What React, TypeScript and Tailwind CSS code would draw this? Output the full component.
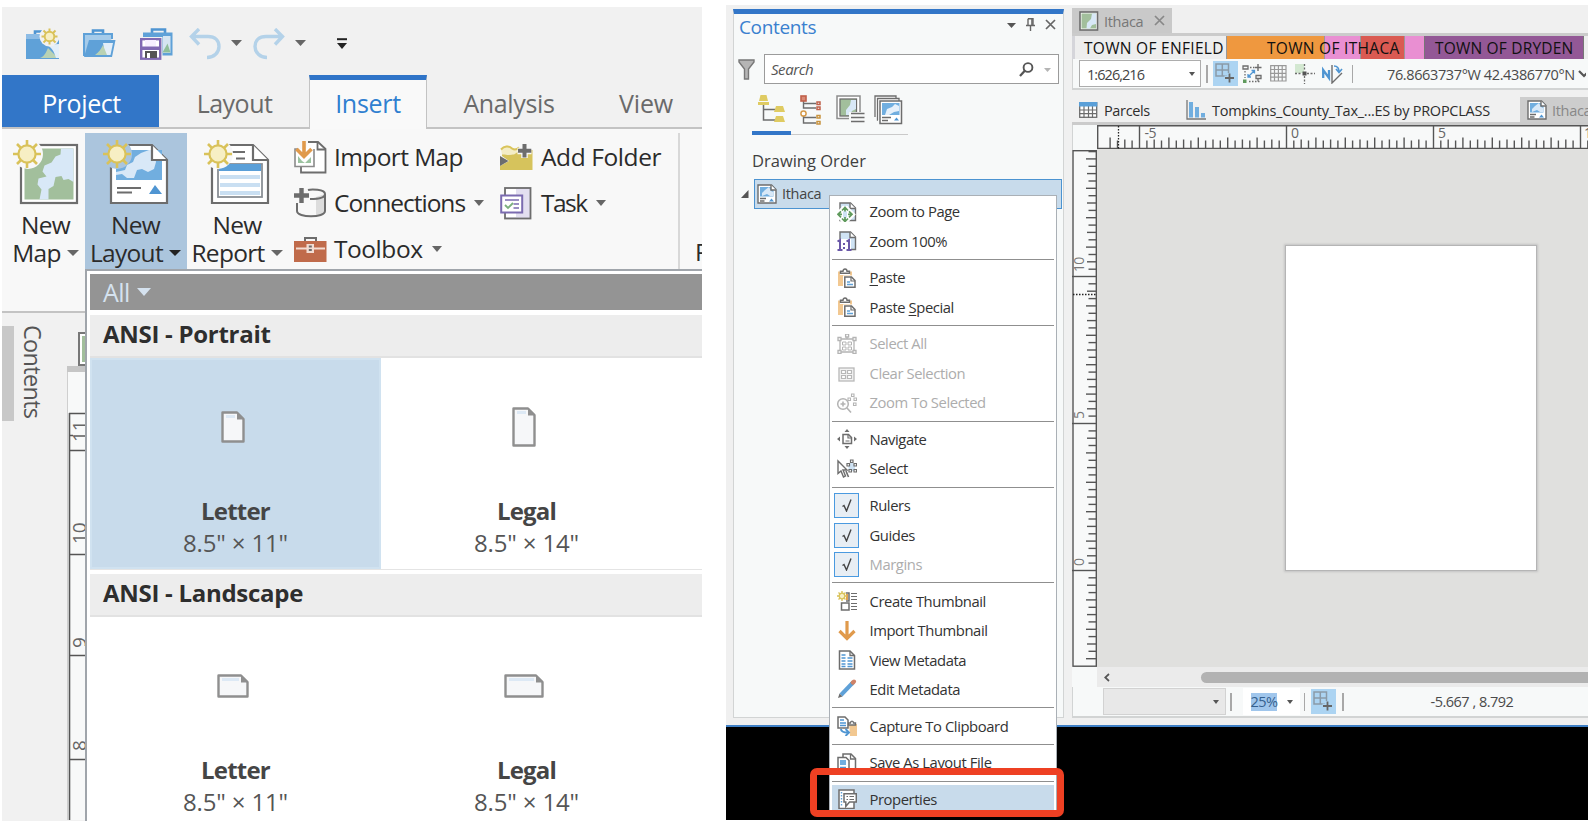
import React from "react";

type P = { children?: React.ReactNode; className?: string };

const Svg = ({ w, h, children, className = "" }: P & { w: number; h: number }) => (
  <svg width={w} height={h} viewBox={`0 0 ${w} ${h}`} fill="none" className={`block shrink-0 ${className}`}>
    {children}
  </svg>
);

const Caret = ({ w = 10, h = 6, color = "#555", className = "" }: { w?: number; h?: number; color?: string; className?: string }) => (
  <Svg w={w} h={h} className={className}>
    <path d={`M0 0H${w}L${w / 2} ${h}Z`} fill={color} />
  </Svg>
);

const Sun = () => (
  <g>
    <path
      d="M14 0V28M0 14H28M4 4L24 24M24 4L4 24"
      stroke="#d9c25a"
      strokeWidth="2.6"
    />
    <circle cx="14" cy="14" r="8.6" fill="#f7efc4" stroke="#d9c25a" strokeWidth="2.2" />
  </g>
);

/* ---------- ribbon icons ---------- */

const NewMapIcon = () => (
  <Svg w={66} h={65}>
    <rect x="8" y="5" width="56" height="58" fill="#fff" stroke="#6d6d6d" strokeWidth="2.2" />
    <rect x="11.500" y="8.500" width="49" height="51" fill="#a2bf9c" />
    <path d="M48 8.500h12.500V42l-5-3-5 1-2-4-6 1-2 9-5 3 0 10.500h-9l2-10-4-5 1-6 8-2-4-5 2-6 7-3 4-6 5-2z" fill="#d8e8f7" />
    <circle cx="15" cy="14" r="15" fill="#f8f8f8" />
    <Sun />
  </Svg>
);
const NewLayoutIcon = () => (
  <Svg w={66} h={65}>
    <path d="M8 5H49L64 20V63H8Z" fill="#fff" stroke="#6d6d6d" strokeWidth="2.2" />
    <rect x="13" y="10" width="46" height="30" fill="#71aedf" />
    <path d="M38 13l8-3h5l2 12-2 7-6 3-6-3-5 1-3 8h-7l-5-4-6 1v-3l9-2 2-5 6-3 2-5z" fill="#d8e8f7" />
    <path d="M49 5V20H64" fill="#fff" stroke="#6d6d6d" strokeWidth="2.2" />
    <path d="M14 48H38M14 52.500H29" stroke="#6d6d6d" strokeWidth="2.200" />
    <path d="M46 54L52 45L59 54Z" fill="#4f95d2" />
    <circle cx="14" cy="14" r="15" fill="#abc5dd" />
    <Sun />
  </Svg>
);
const NewReportIcon = () => (
  <Svg w={66} h={65}>
    <path d="M8 5H49L64 20V63H8Z" fill="#fff" stroke="#6d6d6d" strokeWidth="2.2" />
    <path d="M27 12H41M32 18.500H41" stroke="#6d6d6d" strokeWidth="2" />
    <rect x="14" y="24" width="44" height="33" fill="#fff" stroke="#8a8f95" strokeWidth="1.800" />
    <rect x="15" y="24" width="42" height="7" fill="#5a9fd8" />
    <path d="M16 37H56M16 45H56M16 53H56" stroke="#c9dff2" strokeWidth="4" />
    <path d="M49 5V20H64" fill="#fff" stroke="#6d6d6d" strokeWidth="2.2" />
    <circle cx="14" cy="14" r="15" fill="#f8f8f8" />
    <Sun />
  </Svg>
);
const ImportMapIcon = () => (
  <Svg w={33} h={33}>
    <path d="M14 1H24L31.500 8V31.500H7V26" fill="#fff" stroke="#6d6d6d" strokeWidth="1.800" />
    <path d="M23.500 1V8.500H31.500" stroke="#6d6d6d" strokeWidth="1.800" />
    <path d="M4 8H1V25.500H20V8" fill="#fff" stroke="#8a8a8a" strokeWidth="1.600" />
    <path d="M4 22V15l4 5 3 2zM11 22l6-6v6z" fill="#9cc3a0" />
    <path d="M10 0V15M2.500 8L10 15.500L17.500 8" stroke="#e09a4c" strokeWidth="3.600" />
  </Svg>
);
const ConnectionsIcon = () => (
  <Svg w={33} h={30}>
    <path d="M22 9v18c6-1 9-2 9-4V6z" fill="#dcdcdc" />
    <path d="M3 15V23c0 7 28 7 28 0V6c0-5-14-5-17-4M31 6c0 4-8 5-15 5" stroke="#6d6d6d" strokeWidth="2" />
    <path d="M7.500 0V15M0 7.500H15" stroke="#6d6d6d" strokeWidth="4.400" />
  </Svg>
);
const ToolboxIcon = () => (
  <Svg w={33} h={25}>
    <path d="M11 5V1H22V5" stroke="#6d6d6d" strokeWidth="2" />
    <rect x="0" y="4" width="32.500" height="21" fill="#c06b4b" />
    <path d="M2 11.500H31" stroke="#f3ddd3" strokeWidth="2" />
    <rect x="12.500" y="7" width="7.500" height="9" fill="#f3ddd3" />
    <path d="M16.300 8.500v6" stroke="#6d6d6d" strokeWidth="3" strokeDasharray="2 1.500" />
  </Svg>
);
const AddFolderIcon = () => (
  <Svg w={33} h={27}>
    <path d="M0 26V22L9 17L2 12V9c6 3 11 2 14-1l3-2h13.500V26Z" fill="#d6c35c" />
    <path d="M1 5c3-4 8-4.500 11-1.500 3 2 5 1 7-1l1 4-6 4H2z" fill="#f4edc6" />
    <path d="M1 5.500c3-3.500 8-4 11-1 3 2 5 1 7-1" stroke="#d9c45c" strokeWidth="2" />
    <path d="M0 12L8.500 17L0 22Z" fill="#6d6d6d" />
    <path d="M24.500 0V14M17.500 7H31.500" stroke="#f8f8f8" strokeWidth="6.500" />
    <path d="M24.500 0V13.500M18 6.800H31.300" stroke="#6d6d6d" strokeWidth="4" />
  </Svg>
);
const TaskIcon = () => (
  <Svg w={32} h={34}>
    <rect x="5" y="2" width="25.500" height="30.500" fill="#e3dff0" stroke="#6d6d6d" strokeWidth="1.800" />
    <rect x="6" y="3" width="10" height="28" fill="#fff" />
    <rect x="1.200" y="9.500" width="21" height="17" fill="#fff" stroke="#7b6bb0" strokeWidth="2" />
    <path d="M5 14H19M13.500 18H19M13.500 22H19" stroke="#7b6bb0" strokeWidth="1.700" />
    <path d="M5 19l3 3 5-5" stroke="#7bb07e" strokeWidth="1.900" />
  </Svg>
);

/* ---------- quick access icons ---------- */

const NewProjectIcon = () => (
  <Svg w={34} h={32}>
    <path d="M9 8V3.500H18" stroke="#4f95d2" strokeWidth="2.600" />
    <rect x="0" y="6" width="33" height="25" fill="#5fa1d8" />
    <path d="M14 30c5-2 6-6 8-10l10 10z" fill="#b9d2b4" />
    <path d="M19 17c7 1 9 7 11 13h3V16z" fill="#e3eef8" />
    <path d="M0 6h15v5H0z" fill="#8dbce5" />
    <circle cx="23.500" cy="8.500" r="10" fill="#f1f1f1" />
    <path d="M23.500 0.500V16.500M15.500 8.500H31.500M17.500 2.500L29.500 14.500M29.500 2.500L17.500 14.500" stroke="#d9c25a" strokeWidth="2" />
    <circle cx="23.500" cy="8.500" r="4.800" fill="#f7efc4" stroke="#d9c25a" strokeWidth="1.900" />
  </Svg>
);
const OpenProjectIcon = () => (
  <Svg w={34} h={30}>
    <path d="M10 5V1.500H20V5" stroke="#4f95d2" strokeWidth="2.600" />
    <path d="M1 27V5H29V10" fill="#a5cbea" stroke="#5fa1d8" strokeWidth="2" />
    <path d="M6 11H32.500L29 28H1Z" fill="#5fa1d8" />
    <path d="M20 14l10 0L27.500 26H22z" fill="#e3eef8" />
    <path d="M12 26c4-3 6-6 8-10l4 10z" fill="#b9d2b4" />
  </Svg>
);
const SaveProjectIcon = () => (
  <Svg w={34} h={32}>
    <path d="M12 5V1.500H25V5" stroke="#4f95d2" strokeWidth="2.600" />
    <rect x="3" y="4.500" width="29.500" height="23" fill="#5fa1d8" />
    <rect x="0" y="9" width="22.500" height="23" fill="#f1f1f1" />
    <rect x="23" y="8" width="7.500" height="17" fill="#d5e5f2" />
    <path d="M22.500 24.500l5-9 3 9z" fill="#8fbf9a" />
    <rect x="1.200" y="11.200" width="19" height="19.500" fill="#fff" stroke="#8069b3" strokeWidth="2.400" />
    <rect x="5" y="12" width="11" height="6.500" fill="#f6efff" />
    <rect x="1" y="18.500" width="19" height="3.500" fill="#8069b3" />
    <rect x="5" y="23" width="12" height="7" fill="#555" />
    <rect x="7" y="25" width="3" height="5" fill="#fff" />
  </Svg>
);
const Undo = ({ className = "" }: P) => (
  <Svg w={33} h={32} className={className}>
    <path d="M10 1L2.500 8.500L10 16.500M3 8.500H19c7 0 11 4 11 10s-5 11-12 11" stroke="#b4d2e9" strokeWidth="3.400" />
  </Svg>
);

/* ---------- small 20px icons ---------- */

const g = "#6d6d6d";
const LayoutIcon = () => (
  <Svg w={20} h={20}>
    <path d="M1 1H14.500L19 5.500V19H1Z" fill="#fff" stroke={g} strokeWidth="1.400" />
    <rect x="3" y="3" width="13.500" height="9.500" fill="#71aedf" />
    <path d="M8 6l4-3 2 4 2.500 1v4H13l-3-2-5 2V9z" fill="#d8e8f7" />
    <path d="M14 1V6H19" fill="#fff" stroke={g} strokeWidth="1.400" />
    <path d="M3 14.500H9M3 17H7.500" stroke={g} strokeWidth="1.300" />
    <path d="M12 17.500l2.500-3 2.500 3z" fill="#4f95d2" />
  </Svg>
);
const MapTabIcon = () => (
  <Svg w={20} h={20}>
    <rect x="1" y="1" width="17.500" height="18" fill="#fff" stroke={g} strokeWidth="1.600" />
    <rect x="2.500" y="2.500" width="14.500" height="15" fill="#a2bf9c" />
    <path d="M13 2.500h4V13l-4 1-2 3.500H7.500L8 12l4-4z" fill="#d8e8f7" />
  </Svg>
);
const AddGridIcon = () => (
  <Svg w={25} h={25}>
    <path d="M3 3H15.500V15H3ZM9.300 3V15M3 9H15.500" stroke="#8a9aa8" strokeWidth="1.500" />
    <path d="M16.500 12V22M11.500 17H21.500" stroke="#acd4f2" strokeWidth="5" />
    <path d="M16.500 12.500V21.500M12 17H21" stroke="#666" strokeWidth="1.800" />
  </Svg>
);

const PageFold = ({ fill = "#fff" }: { fill?: string }) => (
  <>
    <path d="M3 1H13.500L18.500 6V18.500H3Z" fill={fill} stroke={g} strokeWidth="1.400" />
    <path d="M13 1V6.500H18.500" fill="#fff" stroke={g} strokeWidth="1.400" />
  </>
);
const Clip = () => (
  <>
    <path d="M1 3.500H15V18H1Z" fill="#f2c891" />
    <path d="M3 3H13V7H3Z" fill="#fff" />
    <path d="M3.500 5.200V3.300H6c0-3 4-3 4 0h2.500v1.900z" fill="#fff" stroke={g} strokeWidth="1.400" />
    <path d="M6 7.500H16V20H6Z" fill="#fff" />
    <path d="M7.800 9H14.500L18 12.500V19.300H7.800Z" fill="#fff" stroke={g} strokeWidth="1.500" />
    <path d="M14 9v4h4" stroke={g} strokeWidth="1.200" />
    <path d="M10 14h3M10 16.500h6" stroke="#5fa1d8" strokeWidth="1.400" />
  </>
);
const icons: Record<string, React.ReactNode> = {
  zoomPage: (
    <>
      <PageFold fill="#cfe3f4" />
      <path d="M8 5L12 9M8 5L4 9M8 20L4 16M8 20L12 16M0 12.500L4 8.500V16.500ZM16 12.500L12 8.500V16.500Z" stroke="#fff" strokeWidth="4" />
      <path d="M8 5.500v4M8 19v-4M1 12.300h4M15 12.300h-4M5 8.500L8 5.500l3 3M5 16.500l3 3 3-3M4 9.300L1 12.300l3 3M12 9.300l3 3-3 3" stroke="#5f9a5c" strokeWidth="1.700" />
    </>
  ),
  zoom100: (
    <>
      <PageFold fill="#cfe3f4" />
      <rect x="0" y="8" width="14" height="12" fill="#fff" />
      <path d="M0.500 10.500L3 9V19.500M9.500 10.500L12 9V19.500M0.500 19h5M9.500 19h5" stroke="#6a58a8" strokeWidth="2" />
      <path d="M7 12v2M7 16v2" stroke="#6a58a8" strokeWidth="2" />
    </>
  ),
  paste: <Clip />,
  selectAll: (
    <g stroke="#b4b4b4" strokeWidth="1.300">
      <path d="M3 5H17V18H3ZM10 5V2" />
      <path d="M5.500 8h3.500v3H5.500zM11 8h3.500v3H11zM5.500 13h3.500v3H5.500zM11 13h3.500v3H11z" strokeWidth="1" />
      <path d="M1 3.500h3v3H1zM16 3.500h3v3h-3zM1 16.500h3v3H1zM16 16.500h3v3h-3zM8.600 0h3v3h-3z" fill="#fff" />
    </g>
  ),
  clear: (
    <g stroke="#b8b8b8" strokeWidth="1.300">
      <rect x="2" y="5" width="15" height="13" fill="#f3f3f3" />
      <path d="M4.500 7.500H8.500v3H4.500zM10.500 7.500h4v3h-4zM4.500 12.500H8.500v3H4.500zM10.500 12.500h4v3h-4z" fill="#fff" strokeWidth="1.200" />
    </g>
  ),
  zoomSel: (
    <g stroke="#b4b4b4" strokeWidth="1.500">
      <circle cx="6" cy="11" r="5.300" fill="#fff" />
      <path d="M3.500 11h5M6 8.500v5M10 15l4 4.500" strokeWidth="1.600" />
      <path d="M11 5h2.500v2.500H11zM14.500 1h2.500v2.500h-2.500zM17 5h2.500v2.500H17zM16.500 10h2.500v2.500h-2.500z" strokeWidth="1.100" />
    </g>
  ),
  navigate: (
    <>
      <path d="M10 0l2.500 3h-5zM10 20l2.500-3h-5zM0 10l3-2.500v5zM20 10l-3-2.500v5z" fill={g} />
      <path d="M6 5.500h5.500L14.500 8.500v6H6z" fill="#fff" stroke={g} strokeWidth="1.500" />
      <path d="M11 5.500V9h3.500M8.500 12h4" stroke={g} strokeWidth="1.200" />
    </>
  ),
  select: (
    <>
      <path d="M1 2V14.500L4 12l2.500 6 2-1L6 11h4z" fill="#fff" stroke={g} strokeWidth="1.400" />
      <path d="M9 12l2.500 6" stroke={g} strokeWidth="1.600" />
      <path d="M11 6l4-3 3 4v5h-6z" fill="#cfe3f4" />
      <path d="M10 4.500h2.500V7H10zM13.500 1H16v2.500h-2.500zM17 4.500h2.500V7H17zM17 10.500h2.500V13H17zM12 10.500h2.500V13H12z" fill="#fff" stroke={g} strokeWidth="1.200" />
    </>
  ),
  create: (
    <>
      <path d="M9 2h3v8h-3" stroke={g} strokeWidth="1.500" />
      <path d="M10 3v6" stroke="#e0a050" strokeWidth="2" />
      <path d="M5 0v10M0 5h10M1.500 1.500l7 7M8.500 1.500l-7 7" stroke="#d9c25a" strokeWidth="1.400" />
      <circle cx="5" cy="5" r="2.800" fill="#f7efc4" stroke="#d9c25a" strokeWidth="1.300" />
      <rect x="4.500" y="12" width="7.500" height="7" fill="#fff" stroke={g} strokeWidth="1.500" />
      <path d="M14 2.500h6M14 5.500h6M14 8.500h6M14 12.500h6M14 15.500h6M14 18.500h6" stroke={g} strokeWidth="1.200" />
    </>
  ),
  importT: <path d="M10 0V17M2.500 10L10 17.500L17.500 10" stroke="#e09a4c" strokeWidth="3.200" />,
  view: (
    <>
      <path d="M2.500 1H13L17.500 5.500V19H2.500Z" fill="#fff" stroke={g} strokeWidth="1.500" />
      <path d="M13 1V5.500H17.500" stroke={g} strokeWidth="1.300" />
      <path d="M4.500 5h4M4.500 8h4M4.500 11h4M4.500 14h4M4.500 16.500h4M10.500 8h5M10.500 11h5M10.500 14h5M10.500 16.500h5" stroke="#4f95d2" strokeWidth="1.400" />
    </>
  ),
  edit: (
    <>
      <path d="M4 16L15 4.500" stroke="#5fa1d8" strokeWidth="4" />
      <path d="M14.500 5L16.500 3" stroke="#8a8a8a" strokeWidth="4" />
      <path d="M16 3.500L17 2.500" stroke="#cf8268" strokeWidth="4" strokeLinecap="round" />
      <path d="M1 19l1.500-4.500 3 3z" fill={g} />
    </>
  ),
  capture: (
    <>
      <path d="M1 1h7l3 3v8H1z" fill="#fff" stroke={g} strokeWidth="1.500" />
      <path d="M3 4h4M3 7h6M3 9.500h6" stroke="#4f95d2" strokeWidth="1.400" />
      <path d="M12 8H20V20H13z" fill="#f2c891" />
      <path d="M11.500 9V7h2c0-2.500 3-2.500 3 0h2v2z" fill="#fff" stroke={g} strokeWidth="1.400" />
      <path d="M4 13.500c1 3 4 3 8 3" stroke="#fff" strokeWidth="4" />
      <path d="M4 13c0 3 3 3.500 7 3.500M8.500 13l3.500 3.500L8.500 20" stroke="#4f95d2" strokeWidth="1.900" />
    </>
  ),
  saveAs: (
    <>
      <path d="M6 4V1H14l4.500 4.500V18H13" fill="#fff" stroke={g} strokeWidth="1.500" />
      <path d="M13.500 1v5h5" stroke={g} strokeWidth="1.300" />
      <path d="M1 4.500h8l3 3V19H1z" fill="#fff" stroke={g} strokeWidth="1.500" />
      <rect x="3" y="7" width="6" height="5" fill="#71aedf" />
      <path d="M3 14.500h6M3 17h4" stroke="#4f95d2" strokeWidth="1.300" />
    </>
  ),
  props: (
    <>
      <rect x="2" y="1" width="15" height="18.500" fill="#fff" stroke={g} strokeWidth="1.500" />
      <path d="M4.500 3v15" stroke="#5fa1d8" strokeWidth="1.400" strokeDasharray="1.500 1.500" />
      <path d="M7 4.800H19.300V13H12.500L8.800 17.500V13H7z" fill="#fff" stroke={g} strokeWidth="1.500" />
      <path d="M9.500 7.500h1.500M9.500 10.500h1.500M12.500 7.500h4.500M12.500 10.500h4.500" stroke={g} strokeWidth="1.200" />
    </>
  ),
};

/* ---------- left window ---------- */

const BigButton = ({ icon, a, b, active, className = "" }: { icon: React.ReactNode; a: string; b: string; active?: boolean; className?: string }) => (
  <div
    className={`flex h-[138px] shrink-0 flex-col items-center pt-[6.500px] text-[24.5px] leading-[28px] text-[#2b2b2b] ${active ? "bg-[#abc5dd]" : ""} ${className}`}
  >
    {icon}
    <div className="mt-[6.500px] tracking-[-0.7px]">{a}</div>
    <div className="flex items-center gap-[6px] tracking-[-0.7px]">
      <span>{b}</span>
      <Caret w={12} h={6} color={active ? "#222" : "#666"} />
    </div>
  </div>
);

const SmallButton = ({ icon, label, caret, className = "" }: { icon: React.ReactNode; label: string; caret?: boolean; className?: string }) => (
  <div className="flex h-[46px] items-center text-[24.5px] leading-[46px] text-[#2b2b2b]">
    <div className="w-[40px] shrink-0">{icon}</div>
    <span className={`whitespace-nowrap ${className}`}>{label}</span>
    {caret && <Caret className="ml-[9px]" color="#666" />}
  </div>
);

const PageGlyph = ({ w, h }: { w: number; h: number }) => (
  <Svg w={w} h={h}>
    <path d={`M1.500 1.500H${w - 8}L${w - 1.5} 8V${h - 1.5}H1.500Z`} fill="#f6f7f9" stroke="#8f8f8f" strokeWidth="2.400" strokeLinejoin="round" />
    <path d={`M${w - 8} 1V8.500H${w - 1}Z`} fill="#8f8f8f" />
    <path d={`M5 5.500H${w - 10}`} stroke="#dde9f5" strokeWidth="3" />
  </Svg>
);

const Tile = ({ name, size, w, h, active }: { name: string; size: string; w: number; h: number; active?: boolean }) => (
  <div
    className={`flex h-[211px] w-[291px] shrink-0 flex-col items-center ${active ? "border-2 border-[#d0e2f0] bg-[#c8dbeb]" : "border-2 border-white"}`}
  >
    <div className="mt-[44px] flex h-[46px] items-center pr-[5px]">
      <PageGlyph w={w} h={h} />
    </div>
    <div className="mt-[43.500px] text-[24px] font-bold leading-[33px] tracking-[-0.8px] text-[#454545]">{name}</div>
    <div className="text-[24px] leading-[32.500px] tracking-[-0.15px] text-[#555]">{size}</div>
  </div>
);

const GalleryHeader = ({ children }: P) => (
  <div className="h-[43px] shrink-0 border-b-2 border-[#e2e2e2] bg-[#ededed] pl-[13px] text-[24px] font-bold leading-[38px] tracking-[-0.28px] text-[#2e2e2e]">
    {children}
  </div>
);

const LeftRuler = () => (
  <Svg w={19} h={454}>
    <rect x="0" y="0" width="19" height="6" fill="#c6c6c6" />
    <rect x="1" y="6" width="18" height="448" fill="#f8f9f9" />
    <path d="M0.500 6V454" stroke="#cfcfcf" />
    <path d="M2.500 47V454M2 47.500H19M2 84.500H19M2 188.500H19M2 289.500H19M2 393.500H19" stroke="#555" strokeWidth="1.600" />
    <path d="M3 69.500H6" stroke="#555" strokeWidth="1.500" />
    <g fontSize="19" fill="#666">
      <text transform="translate(19 76) rotate(-90)">11</text>
      <text transform="translate(19 178) rotate(-90)">10</text>
      <text transform="translate(19 282) rotate(-90)">9</text>
      <text transform="translate(19 385) rotate(-90)">8</text>
    </g>
  </Svg>
);

const LeftWindow = () => (
  <div className="relative ml-[2px] mt-[7px] flex h-[813.500px] w-[700px] shrink-0 flex-col overflow-hidden bg-[#f1f1f1]">
    <div className="flex h-[68px] shrink-0 items-start pl-[24px] pt-[21px]">
      <NewProjectIcon />
      <div className="ml-[23px] mt-[1px]"><OpenProjectIcon /></div>
      <div className="ml-[23px]"><SaveProjectIcon /></div>
      <Undo className="ml-[15px]" />
      <Caret w={11} h={6} className="ml-[9px] mt-[12px]" color="#666" />
      <Undo className="ml-[10px] -scale-x-100" />
      <Caret w={11} h={6} className="ml-[10px] mt-[12px]" color="#666" />
      <Svg w={10} h={12} className="ml-[31px] mt-[10px]">
        <path d="M0 1.200H10" stroke="#222" strokeWidth="2" />
        <path d="M0 5H10L5 11Z" fill="#222" />
      </Svg>
    </div>
    <div className="flex h-[54px] shrink-0 border-b-2 border-[#c3c3c3] text-[25px] leading-[56px] text-[#6a6a6a]">
      <div className="w-[157px] bg-[#3276c8] pl-[2px] text-center tracking-[-0.4px] text-white">Project</div>
      <div className="w-[150px] pl-[1px] text-center tracking-[-0.5px]">Layout</div>
      <div className="-mb-[2px] w-[118px] border-x border-t-[5px] border-x-[#c3c3c3] border-t-[#2f74c8] bg-[#f9f9f9] text-center leading-[46px] tracking-[-0.3px] text-[#2f7fd0]">
        Insert
      </div>
      <div className="w-[164px] text-center tracking-[-0.35px]">Analysis</div>
      <div className="w-[110px] text-center tracking-[-0.1px]">View</div>
    </div>
    <div className="flex h-[184px] shrink-0 border-b-2 border-[#c3c3c3] bg-[#f8f8f8] pt-[4px]">
      <BigButton icon={<NewMapIcon />} a="New" b="Map" className="w-[83px] pl-[4px]" />
      <BigButton icon={<NewLayoutIcon />} a="New" b="Layout" active className="w-[102px] pr-px" />
      <BigButton icon={<NewReportIcon />} a="New" b="Report" className="w-[101px] pr-px" />
      <div className="ml-[6px] flex w-[206px] shrink-0 flex-col pt-[1px]">
        <SmallButton icon={<ImportMapIcon />} label="Import Map" className="tracking-[-0.6px]" />
        <SmallButton icon={<ConnectionsIcon />} label="Connections" caret className="tracking-[-1px]" />
        <SmallButton icon={<ToolboxIcon />} label="Toolbox" caret className="tracking-[-0.45px]" />
      </div>
      <div className="flex w-[180px] shrink-0 flex-col border-r-2 border-[#d8d8d8] pt-[1px]">
        <SmallButton icon={<AddFolderIcon />} label="Add Folder" className="pl-px tracking-[-0.4px]" />
        <SmallButton icon={<TaskIcon />} label="Task" caret className="pl-px tracking-[-1.500px]" />
      </div>
      <div className="ml-[15px] shrink-0 pt-[105px] text-[24.5px] leading-[28px] text-[#2b2b2b]">P</div>
    </div>
    <div className="flex flex-1 items-start pt-[13px]">
      <div className="h-[95px] w-[12px] bg-[#c8c8c8]" />
      <div className="-mt-px ml-[3px] w-[32px] text-[23.500px] leading-[28px] tracking-[-0.7px] text-[#555] [writing-mode:vertical-rl]">
        <span className="block pr-[2px]">Contents</span>
      </div>
      <div className="ml-[18px] pt-[6px]">
        <div className="ml-[11px] h-[34px] w-[20px] border-2 border-[#777] bg-white p-[2px]">
          <div className="h-full bg-[#a2bf9c]" />
        </div>
        <LeftRuler />
      </div>
    </div>
    <div className="absolute left-[83px] top-[262px] flex h-[560px] w-[620px] flex-col border-l-2 border-t-2 border-[#a0a5ab] bg-white pl-[3px] pt-[3px]">
      <div className="flex h-[36px] shrink-0 items-center bg-[#949494] pl-[13px] text-[25px] leading-[36px] tracking-[-0.6px] text-[#d5e2ef]">
        <span>All</span>
        <Caret w={14} h={8} color="#d5e2ef" className="ml-[7px]" />
      </div>
      <div className="h-[5px] shrink-0" />
      <GalleryHeader>ANSI - Portrait</GalleryHeader>
      <div className="flex border-b border-[#e4e4e4]">
        <Tile name="Letter" size={'8.5" × 11"'} w={24} h={32} active />
        <Tile name="Legal" size={'8.5" × 14"'} w={24} h={40} />
      </div>
      <div className="h-[4px] shrink-0" />
      <GalleryHeader>ANSI - Landscape</GalleryHeader>
      <div className="flex">
        <Tile name="Letter" size={'8.5" × 11"'} w={32} h={24} />
        <Tile name="Legal" size={'8.5" × 14"'} w={40} h={24} />
      </div>
    </div>
  </div>
);

/* ---------- contents pane ---------- */

const ContentsPane = () => (
  <div className="ml-[7px] mt-[4px] flex h-[709px] w-[331px] shrink-0 flex-col border border-t-[5px] border-[#d2d4d4] border-t-[#3276c8] bg-[#f7f9f9]">
    <div className="flex h-[40px] shrink-0 items-start pl-[5px]">
      <span className="w-[268px] text-[19px] leading-[26px] tracking-[-0.35px] text-[#3a80cf]">Contents</span>
      <Caret w={9} h={5} className="mt-[9px]" />
      <Svg w={9} h={13} className="ml-[10px] mt-[4px]">
        <path d="M2 0.700H7V7M2 0.700V7M0 7.500H9M4.500 8V13" stroke="#666" strokeWidth="1.400" />
        <path d="M6 1v6" stroke="#666" strokeWidth="1.600" />
      </Svg>
      <Svg w={11} h={11} className="ml-[10px] mt-[5px]">
        <path d="M1 1L10 10M10 1L1 10" stroke="#666" strokeWidth="1.700" />
      </Svg>
    </div>
    <div className="flex h-[30px] shrink-0 items-center pl-[4px]">
      <Svg w={17} h={21}>
        <path d="M1 1H16V3L10.500 10V20H6.500V10L1 3Z" fill="#b5b5b5" stroke="#777" strokeWidth="1.400" />
      </Svg>
      <div className="ml-[9px] flex h-[30px] w-[295px] items-center border border-[#9b9b9b] bg-white pl-[6px] pr-[7px]">
        <span className="flex-1 text-[15px] italic leading-[28px] tracking-[-0.45px] text-[#555]">Search</span>
        <Svg w={15} h={15}>
          <circle cx="9" cy="5.500" r="4.400" stroke="#555" strokeWidth="1.900" />
          <path d="M6 8.500L1 14" stroke="#555" strokeWidth="2.300" />
        </Svg>
        <Caret w={7} h={4} color="#b5b5b5" className="ml-[10px] mt-[2px]" />
      </div>
    </div>
    <div className="ml-[18px] flex h-[51px] w-[156px] shrink-0 items-start border-b border-[#cacaca] pt-[11px]">
      <div className="flex h-[40px] w-[39px] flex-col items-center justify-between border-b-4 border-[#3276c8]">
        <Svg w={27} h={29}>
          <path d="M5.500 9V25H17M5.500 14.500H17" stroke={g} strokeWidth="1.500" />
          <path d="M2.500 0h6l1.500 6H1zM0 7h11v3H0zM18 11h7l2 6H16zM18 21h7l2 6H16z" fill="#dfcb62" />
        </Svg>
      </div>
      <Svg w={21} h={30} className="ml-[9px]">
        <path d="M3.500 6V8.500H16M3.500 8.500V13H16M3.500 20.500V22.500H16M3.500 22V28H16" stroke={g} strokeWidth="1.400" />
        <rect x="1" y="1" width="5" height="5" fill="#d98a76" stroke="#c0604a" strokeWidth="1.600" />
        <rect x="17" y="7" width="3" height="2.500" stroke="#c0604a" strokeWidth="1.500" />
        <rect x="17" y="12" width="3" height="2.500" stroke="#c0604a" strokeWidth="1.500" />
        <circle cx="3.500" cy="18.500" r="2.600" fill="#fff" stroke="#d59a4a" strokeWidth="1.500" />
        <rect x="17" y="20.500" width="3" height="2.500" stroke="#c8933f" strokeWidth="1.500" />
        <rect x="17" y="26.500" width="3" height="2.500" stroke="#c8933f" strokeWidth="1.500" />
      </Svg>
      <Svg w={29} h={29} className="ml-[15px]">
        <rect x="1" y="1" width="23" height="22.500" fill="#fff" stroke="#8d8d8d" strokeWidth="1.500" />
        <rect x="4" y="4" width="16.500" height="17" fill="#a2bf9c" stroke={g} strokeWidth="1.300" />
        <path d="M15 5h5v9l-4 2-2 4h-4l0-5 4-5z" fill="#d8e8f7" />
        <path d="M13 17H29V29H13z" fill="#f7f9f9" />
        <path d="M15 18.500H28.500M15 22.500H28.500M15 26.500H28.500" stroke={g} strokeWidth="1.500" />
      </Svg>
      <Svg w={29} h={30} className="ml-[9px]">
        <path d="M1 22V1H22V4M4 25H3.500V3.500H25V6" fill="#fff" stroke={g} strokeWidth="1.300" />
        <rect x="6" y="6" width="21.500" height="22.500" fill="#fff" stroke={g} strokeWidth="1.500" />
        <rect x="8" y="8" width="17.500" height="12" fill="#71aedf" />
        <path d="M13 14l5-2 3-3 4 2v5l-5 1-5 3h-4z" fill="#e6f0fa" />
        <path d="M8 22.500H17M8 25.500H14" stroke={g} strokeWidth="1.300" />
        <path d="M20 25.500l2.500-3 2.500 3z" fill="#4f95d2" />
      </Svg>
    </div>
    <div className="h-[44px] shrink-0 pl-[18px] pt-[13px] text-[16.500px] font-medium leading-[26px] text-[#3f3f3f]">Drawing Order</div>
    <div className="flex h-[30px] shrink-0 items-center">
      <Svg w={8} h={8} className="ml-[7px]">
        <path d="M7.500 0V8H0Z" fill="#555" />
      </Svg>
      <div className="ml-[5px] flex h-[30px] w-[308px] items-center border-[1.500px] border-[#4b93d1] bg-[#c8dbeb] pl-[2px]">
        <LayoutIcon />
        <span className="ml-[5px] text-[14.500px] leading-[26px] tracking-[-0.3px] text-[#444]">Ithaca</span>
      </div>
    </div>
  </div>
);

/* ---------- layout view ---------- */

const HRuler = () => {
  const ticks: React.ReactNode[] = [];
  for (let i = -4; i < 64; i++) {
    const x = 42.5 + i * 7.35;
    if (x < 2) continue;
    const major = i % 20 === 0 && i >= 0;
    const h = major ? 23 : i % 4 === 0 ? 10.5 : i % 2 === 0 ? 8.5 : 7.5;
    ticks.push(<path key={i} d={`M${x.toFixed(1)} ${23 - h}V23`} stroke="#555" strokeWidth={1.4} />);
  }
  return (
    <Svg w={491} h={24}>
      <rect width="491" height="24" fill="#f8f9f9" />
      <path d="M0.700 24V0.700H491M0 23.400H491" stroke="#555" strokeWidth="1.400" />
      {ticks}
      <path d="M21.500 1V24" stroke="#222" strokeWidth="1.300" strokeDasharray="1.500 1.500" />
      <g fontSize="14" fill="#666" letterSpacing="-0.4">
        <text x="47.500" y="13">-5</text>
        <text x="194" y="13">0</text>
        <text x="341" y="13">5</text>
        <text x="487" y="13">10</text>
      </g>
    </Svg>
  );
};

const VRuler = () => {
  const ticks: React.ReactNode[] = [];
  for (let i = -17; i < 53; i++) {
    const y = 126.5 + i * 7.35;
    if (y < 1 || y > 514) continue;
    const major = i >= 0 && i % 20 === 0;
    const w = major ? 24 : i % 4 === 0 ? 10 : i % 2 === 0 ? 9 : 7.5;
    ticks.push(<path key={i} d={`M${24 - w} ${y.toFixed(1)}H24`} stroke="#555" strokeWidth={1.4} />);
  }
  return (
    <Svg w={25} h={517}>
      <rect width="25" height="517" fill="#f8f9f9" />
      <rect x="1" y="0.700" width="23.300" height="515.500" stroke="#555" strokeWidth="1.400" />
      {ticks}
      <path d="M1 144.500H24" stroke="#222" strokeWidth="1.300" strokeDasharray="1.500 1.500" />
      <g fontSize="14" fill="#777" letterSpacing="-0.8">
        <text transform="translate(12 122) rotate(-90)">10</text>
        <text transform="translate(12 269) rotate(-90)">5</text>
        <text transform="translate(12 416) rotate(-90)">0</text>
      </g>
    </Svg>
  );
};

const Sep = ({ className = "" }: P) => <div className={`h-[18px] w-[1.500px] shrink-0 bg-[#a8a8a8] ${className}`} />;

const LayoutPane = () => (
  <div className="ml-[8px] mt-[3px] flex h-[711px] min-w-0 flex-1 flex-col">
    <div className="flex h-[25px] w-[100px] shrink-0 items-center bg-[#c9c9c9] pl-[7px]">
      <MapTabIcon />
      <span className="ml-[5px] pt-[2px] text-[14.500px] leading-[24px] tracking-[-0.3px] text-[#777]">Ithaca</span>
      <Svg w={11} h={11} className="ml-[11px]">
        <path d="M1 1L10 10M10 1L1 10" stroke="#888" strokeWidth="1.700" />
      </Svg>
    </div>
    <div className="h-[3px] shrink-0 bg-[#cbcbcb]" />
    <div className="flex h-[23px] shrink-0 whitespace-nowrap bg-[#d5d5da] pl-[3px] text-[15.500px] font-medium leading-[25px] text-[#111]">
      <div className="w-[151px] bg-[#eeeeee] pl-[9px] tracking-[0.3px]">TOWN OF ENFIELD</div>
      <div className="relative flex w-[358px]">
        <div className="w-[98px] border-l border-[#999] bg-[#ef983f]" />
        <div className="w-[36px] border-l border-[#999] bg-[#e98fd2]" />
        <div className="w-[44px] border-l border-[#999] bg-[#da5a52]" />
        <div className="w-[20px] border-l border-[#999] bg-[#e98fd2]" />
        <div className="w-[160px] border-x border-[#777] bg-[#935896] pl-[10px] tracking-[0.2px]">TOWN OF DRYDEN</div>
        <span className="absolute left-[41px] top-0 tracking-[0.3px]">TOWN OF ITHACA</span>
      </div>
      <div className="flex-1 bg-[#eee]" />
    </div>
    <div className="flex h-[31px] shrink-0 items-center border-b-2 border-l border-[#d2d4d4] bg-[#f7f9f9] pl-[6px]">
      <div className="flex h-[27px] w-[122px] shrink-0 items-center justify-between border border-[#adadad] bg-white pl-[7px] pr-[5px]">
        <span className="pt-px text-[14.500px] leading-[25px] tracking-[-0.95px] text-[#444]">1:626,216</span>
        <Caret w={6} h={4} />
      </div>
      <Sep className="ml-[5px] mr-[5px]" />
      <div className="shrink-0 bg-[#acd4f2]"><AddGridIcon /></div>
      <Svg w={20} h={20} className="ml-[4px]">
        <path d="M1 2h5v3H1zM14 11.500h5v3h-5z" stroke={g} strokeWidth="1.300" />
        <path d="M16 0v7M12.500 3.500h7" stroke={g} strokeWidth="1.400" />
        <path d="M8 3.500h4M3 7v7M7 17.500h11" stroke={g} strokeWidth="1.300" strokeDasharray="1.500 1.500" />
        <path d="M6 13L12 7M9.500 6.500H12.500v3M6 10v3h3" stroke="#4f95d2" strokeWidth="1.300" />
        <path d="M16 15v2.500" stroke={g} strokeWidth="1.300" />
        <rect x="1" y="15.500" width="3.500" height="3.500" fill="#5f9a5c" />
      </Svg>
      <Svg w={17} h={17} className="ml-[8px]">
        <path d="M0.700 0.700H16V16H0.700ZM4.500 0V16.500M8.400 0V16.500M12.200 0V16.500M0 4.500H16.500M0 8.400H16.500M0 12.200H16.500" stroke="#999" strokeWidth="1.200" />
      </Svg>
      <Svg w={20} h={20} className="ml-[8px]">
        <rect x="0" y="0" width="9" height="9" fill="#d3e8d1" />
        <path d="M9.500 0V7M9.500 12V20M0 9.500H7M12 9.500H20" stroke={g} strokeWidth="1.300" strokeDasharray="2 1.500" />
        <rect x="7.500" y="7.500" width="4" height="4" fill="#555" />
      </Svg>
      <Svg w={21} h={20} className="ml-[7px]">
        <path d="M1.200 14V6L7 14V6" stroke="#4f95d2" strokeWidth="2.300" />
        <path d="M10 1V19L20 9" stroke={g} strokeWidth="1.400" />
        <path d="M12 2c4 0 5 2 5 6M14 5l3 3.500L20 5" stroke="#4f95d2" strokeWidth="1.600" />
      </Svg>
      <Sep className="ml-[9px]" />
      <span className="ml-[34px] w-[191px] shrink-0 whitespace-nowrap pt-px text-[14.500px] leading-[25px] tracking-[-0.38px] text-[#4a4a4a]">76.8663737°W 42.4386770°N</span>
      <Svg w={8} h={8}>
        <path d="M1 1l5 5 5-5" stroke="#555" strokeWidth="2.200" />
      </Svg>
    </div>
    <div className="flex h-[32px] shrink-0 items-end overflow-hidden whitespace-nowrap text-[14.500px] leading-[25px] text-[#2e2e2e]">
      <div className="flex h-[25px] w-[114px] shrink-0 items-center pl-[7px]">
        <Svg w={19} h={16}>
          <rect x="0.700" y="0.700" width="17" height="14.600" fill="#fff" stroke={g} strokeWidth="1.300" />
          <path d="M5 4V16M9.500 4V16M13.500 4V16M0 8H18M0 11.700H18" stroke={g} strokeWidth="1.200" />
          <rect x="0" y="0" width="18.300" height="4.500" fill="#5a9fd8" />
        </Svg>
        <span className="ml-[6px] pt-px tracking-[-0.35px]">Parcels</span>
      </div>
      <div className="flex h-[25px] w-[334px] shrink-0 items-center">
        <Svg w={20} h={20}>
          <path d="M1 0V19H20" stroke="#777" strokeWidth="1.300" />
          <path d="M5 2V17.500M11 7V17.500M17 13V17.500" stroke="#71aedf" strokeWidth="4" />
        </Svg>
        <span className="ml-[6px] pt-px tracking-[-0.25px]">Tompkins_County_Tax_...ES by PROPCLASS</span>
      </div>
      <div className="flex h-[25px] flex-1 items-center overflow-hidden bg-[#cdcdcd] pl-[7px] text-[#888]">
        <LayoutIcon />
        <span className="ml-[5px] pt-px tracking-[-0.3px]">Ithaca</span>
      </div>
    </div>
    <div className="h-[3px] shrink-0 bg-[#cbcbcb]" />
    <div className="flex h-[562px] shrink-0 bg-[#f7f9f9]">
      <div className="w-[25px] shrink-0">
        <div className="h-[25px] border-l border-[#d2d4d4]" />
        <VRuler />
      </div>
      <div className="flex min-w-0 flex-1 flex-col">
        <HRuler />
        <div className="flex h-[518px] shrink-0 bg-[#e0e0de] pl-[188px] pt-[96px]">
          <div className="h-[326px] w-[252px] border border-[#b5b5b5] bg-white shadow-[0_0_2px_1px_#c4c4c4]" />
        </div>
        <div className="flex h-[20px] shrink-0 items-center bg-[#ebebeb] pl-[7px]">
          <Svg w={6} h={9}>
            <path d="M5 1L1.200 4.500L5 8" stroke="#555" strokeWidth="1.700" />
          </Svg>
          <div className="ml-[91px] h-[11px] flex-1 rounded-l-full bg-[#b2b2b2]" />
        </div>
      </div>
    </div>
    <div className="flex h-[31px] shrink-0 items-center border-b-2 border-l border-[#d2d4d4] bg-[#f7f9f9] pl-[30px]">
      <div className="flex h-[27px] w-[123px] items-center justify-end border border-[#d2d2d2] bg-[#e8e8e8] pr-[6px]">
        <Caret w={6} h={4} />
      </div>
      <Sep className="ml-[4px]" />
      <div className="ml-[11px] flex h-[27px] w-[57px] items-center bg-white pl-[8px]">
        <span className="bg-[#a0c6ec] text-[14.500px] leading-[18px] tracking-[-0.6px] text-[#35618f]">25%</span>
        <Caret w={6} h={4} className="ml-[10px]" />
      </div>
      <Sep className="ml-[4px] mr-[6px]" />
      <div className="bg-[#acd4f2]"><AddGridIcon /></div>
      <Sep className="ml-[6px]" />
      <span className="ml-[87px] text-[14.500px] leading-[25px] tracking-[-0.5px] text-[#4a4a4a]">-5.667 , 8.792</span>
    </div>
  </div>
);

/* ---------- context menu ---------- */

type Item = { t: React.ReactNode; i?: string; off?: boolean; check?: boolean; hot?: boolean } | null;
const items: Item[] = [
  { t: "Zoom to Page", i: "zoomPage" },
  { t: "Zoom 100%", i: "zoom100" },
  null,
  { t: <><u>P</u>aste</>, i: "paste" },
  { t: <>Paste <u>S</u>pecial</>, i: "paste" },
  null,
  { t: "Select All", i: "selectAll", off: true },
  { t: "Clear Selection", i: "clear", off: true },
  { t: "Zoom To Selected", i: "zoomSel", off: true },
  null,
  { t: "Navigate", i: "navigate" },
  { t: "Select", i: "select" },
  null,
  { t: "Rulers", check: true },
  { t: "Guides", check: true },
  { t: "Margins", check: true, off: true },
  null,
  { t: "Create Thumbnail", i: "create" },
  { t: "Import Thumbnail", i: "importT" },
  { t: "View Metadata", i: "view" },
  { t: "Edit Metadata", i: "edit" },
  null,
  { t: "Capture To Clipboard", i: "capture" },
  null,
  { t: "Save As Layout File", i: "saveAs" },
  null,
  { t: "Properties", i: "props", hot: true },
];

const ContextMenu = () => (
  <div className="absolute left-[103px] top-[190px] h-[622px] w-[228px] overflow-hidden border border-[#aab0b6] bg-white px-[2px] pt-[1px]">
    {items.map((it, n) =>
      it === null ? (
        <div key={n} className="flex h-[7.200px] items-center">
          <div className="h-px w-full bg-[#8f8f8f]" />
        </div>
      ) : (
        <div key={n} className={`flex h-[29.460px] items-center pl-[2px] ${it.hot ? "bg-[#c8dbeb]" : ""}`}>
          <div className="flex w-[25px] shrink-0 justify-center">
            {it.check ? (
              <div className="flex size-[25px] items-center justify-center border-[1.500px] border-[#4a9ae0] bg-[#e8eef4]">
                <Svg w={10} h={13}>
                  <path d="M0.500 7.500L2 6.500L4.500 12L9 0.500" stroke="#444" strokeWidth="1.400" />
                </Svg>
              </div>
            ) : (
              <Svg w={20} h={20}>{icons[it.i as string]}</Svg>
            )}
          </div>
          <span className={`ml-[10.500px] whitespace-nowrap text-[14.800px] leading-[29px] tracking-[-0.42px] underline-offset-2 ${it.off ? "text-[#adadad]" : "text-[#333]"}`}>
            {it.t}
          </span>
        </div>
      )
    )}
  </div>
);

const RightWindow = () => (
  <div className="relative ml-[24px] mt-[5px] flex h-[815px] w-[862px] shrink-0 flex-col bg-black">
    <div className="flex h-[722px] shrink-0 border-b-2 border-[#3f80c6] bg-[#f0f0f0]">
      <ContentsPane />
      <LayoutPane />
    </div>
    <ContextMenu />
    <div className="absolute left-[84px] top-[763px] h-[49px] w-[254px] rounded-[7px] border-[7px] border-[#ee4023]" />
  </div>
);

export default function App() {
  return (
    <div className="flex h-[834px] w-[1590px] items-start overflow-hidden bg-white font-['Open_Sans','Noto_Sans',sans-serif]">
      <LeftWindow />
      <RightWindow />
    </div>
  );
}
